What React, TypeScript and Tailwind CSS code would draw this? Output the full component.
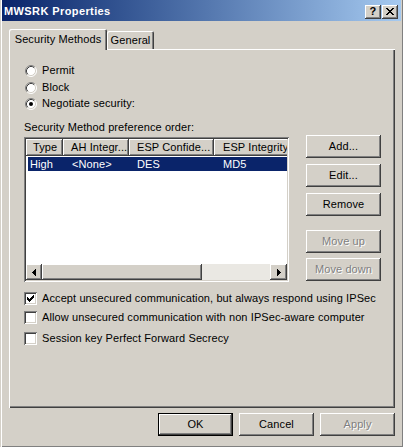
import type { ReactNode } from 'react'

const raised =
  'shadow-[inset_-1px_-1px_#404040,inset_1px_1px_#ffffff,inset_-2px_-2px_#808080,inset_2px_2px_#d4d0c8]'
const sunken =
  'shadow-[inset_1px_1px_#808080,inset_-1px_-1px_#ffffff,inset_2px_2px_#404040,inset_-2px_-2px_#d4d0c8]'
const greyText = 'text-[#808080] [text-shadow:1px_1px_0_#ffffff]'

function Button({ children, disabled = false, primary = false }: { children: ReactNode; disabled?: boolean; primary?: boolean }) {
  const frame = primary
    ? 'shadow-[inset_0_0_0_1px_#000000,inset_-2px_-2px_#404040,inset_2px_2px_#ffffff,inset_-3px_-3px_#808080]'
    : raised
  return (
    <div className={`w-[75px] h-[23px] shrink-0 flex items-center justify-center bg-[#d4d0c8] ${frame} ${disabled ? greyText : 'text-black'}`}>
      {children}
    </div>
  )
}

function Radio({ checked = false }: { checked?: boolean }) {
  return (
    <svg width="12" height="12" viewBox="0 0 12 12" className="shrink-0 ml-[1px]">
      <circle cx="6" cy="6" r="5" fill="#ffffff" />
      <path d="M9.89 2.11A5.5 5.5 0 0 0 2.11 9.89" fill="none" stroke="#808080" />
      <path d="M9.89 2.11A5.5 5.5 0 0 1 2.11 9.89" fill="none" stroke="#ffffff" />
      <path d="M9.18 2.82A4.5 4.5 0 0 0 2.82 9.18" fill="none" stroke="#404040" />
      <path d="M9.18 2.82A4.5 4.5 0 0 1 2.82 9.18" fill="none" stroke="#d4d0c8" />
      {checked && <circle cx="6" cy="6" r="2" fill="#000000" />}
    </svg>
  )
}

const tick = [2, 3, 4, 3, 2, 1, 0]

function Checkbox({ checked = false }: { checked?: boolean }) {
  return (
    <div className={`w-[13px] h-[13px] shrink-0 bg-white ${sunken}`}>
      {checked && (
        <svg width="13" height="13" viewBox="0 0 13 13" shapeRendering="crispEdges">
          {tick.map((y, i) => (
            <rect key={i} x={3 + i} y={3 + y} width="1" height="3" fill="#000000" />
          ))}
        </svg>
      )}
    </div>
  )
}

// close glyph, row by row: [x, width]
const xRows: [number, number][][] = [
  [[0, 2], [6, 2]],
  [[1, 2], [5, 2]],
  [[2, 4]],
  [[3, 2]],
  [[2, 4]],
  [[1, 2], [5, 2]],
  [[0, 2], [6, 2]],
]

function Arrow({ dir }: { dir: 'left' | 'right' }) {
  const cols = [
    [3, 1],
    [2, 3],
    [1, 5],
    [0, 7],
  ]
  return (
    <svg width="4" height="7" viewBox="0 0 4 7" shapeRendering="crispEdges">
      {cols.map(([y, h], i) => (
        <rect key={i} x={dir === 'left' ? i : 3 - i} y={y} width="1" height={h} fill="#000000" />
      ))}
    </svg>
  )
}

function RadioRow({ label, checked, className = '' }: { label: string; checked?: boolean; className?: string }) {
  return (
    <div className={`flex items-center h-[13px] gap-[5px] ${className}`}>
      <Radio checked={checked} />
      <span>{label}</span>
    </div>
  )
}

function CheckRow({ label, checked, className = '' }: { label: string; checked?: boolean; className?: string }) {
  return (
    <div className={`flex items-center h-[13px] gap-[5px] ${className}`}>
      <Checkbox checked={checked} />
      <span className="whitespace-nowrap">{label}</span>
    </div>
  )
}

export default function App() {
  return (
    <div className="w-[403px] h-[447px] bg-[#d4d0c8] font-['Liberation_Sans',Arial,sans-serif] text-[11px] leading-[13px] tracking-[0.1px] text-black shadow-[inset_1px_0_#d4d0c8,inset_2px_0_#ffffff,inset_-1px_-1px_#808080] flex flex-col overflow-hidden select-none">
      {/* caption */}
      <div className="mx-[2px] h-[21px] shrink-0 flex items-start bg-linear-to-r from-[#0a246a] to-[#a6caf0]">
        <div className="pl-[2px] pt-[5px] font-bold text-white whitespace-nowrap tracking-[0.4px]">MWSRK Properties</div>
        <div className="ml-auto mt-[5px] mr-[3px] flex gap-[1px]">
          <div className={`w-[16px] h-[14px] bg-[#d4d0c8] ${raised} flex items-center justify-center font-bold text-[11px] leading-[11px] pb-[1px]`}>
            ?
          </div>
          <div className={`w-[16px] h-[14px] bg-[#d4d0c8] ${raised}`}>
            <svg width="16" height="14" viewBox="0 0 16 14" shapeRendering="crispEdges">
              {xRows.map((segs, y) =>
                segs.map(([x, w], j) => <rect key={`${y}-${j}`} x={4 + x} y={3 + y} width={w} height="1" fill="#000000" />),
              )}
            </svg>
          </div>
        </div>
      </div>

      {/* tabs */}
      <div className="ml-[9px] mt-[8px] h-[20px] shrink-0 flex items-end">
        <div className="relative z-10 self-start w-[98px] h-[21px] bg-[#d4d0c8] rounded-tl-[2px] rounded-tr-[2px] shadow-[inset_1px_1px_#ffffff,inset_-1px_0_#404040,inset_-2px_0_#808080] flex items-center justify-center pb-[1px]">
          Security Methods
        </div>
        <div className="w-[47px] h-[18px] bg-[#d4d0c8] rounded-tl-[2px] rounded-tr-[2px] shadow-[inset_1px_1px_#ffffff,inset_-1px_0_#404040,inset_-2px_0_#808080] flex items-center justify-center pt-[1px]">
          General
        </div>
      </div>

      {/* panel */}
      <div className="ml-[9px] w-[386px] h-[359px] shrink-0 shadow-[inset_1px_1px_#ffffff,inset_-1px_-1px_#404040,inset_-2px_-2px_#808080] flex flex-col pl-[15px] pt-[15px]">
        <RadioRow label="Permit" />
        <RadioRow label="Block" className="mt-[4px]" />
        <RadioRow label="Negotiate security:" checked className="mt-[3px]" />
        <div className="mt-[11px] h-[13px]">Security Method preference order:</div>

        <div className="mt-[1px] flex items-start">
          {/* list view */}
          <div className={`mt-[2px] w-[265px] h-[145px] bg-white ${sunken} p-[2px] flex flex-col`}>
            <div className="h-[17px] flex overflow-hidden whitespace-nowrap shrink-0">
              <div className={`w-[37px] shrink-0 bg-[#d4d0c8] ${raised} flex items-center pl-[7px]`}>Type</div>
              <div className={`w-[66px] shrink-0 bg-[#d4d0c8] ${raised} flex items-center pl-[8px]`}>AH Integr...</div>
              <div className={`w-[85px] shrink-0 bg-[#d4d0c8] ${raised} flex items-center pl-[8px]`}>ESP Confide...</div>
              <div className={`w-[90px] shrink-0 bg-[#d4d0c8] ${raised} flex items-center pl-[9px]`}>ESP Integrity</div>
            </div>
            <div className="flex-1 pt-[1px]">
              <div className="ml-[2px] h-[14px] bg-[#0a246a] text-white flex items-center whitespace-nowrap overflow-hidden">
                <div className="w-[35px] shrink-0 pl-[2px]">High</div>
                <div className="w-[66px] shrink-0 pl-[9px]">&lt;None&gt;</div>
                <div className="w-[85px] shrink-0 pl-[8px]">DES</div>
                <div className="shrink-0 pl-[9px]">MD5</div>
              </div>
            </div>
            <div className="h-[16px] flex shrink-0">
              <div className={`w-[16px] shrink-0 bg-[#d4d0c8] ${raised} flex items-center justify-center`}>
                <Arrow dir="left" />
              </div>
              <div className={`w-[160px] shrink-0 bg-[#d4d0c8] ${raised}`} />
              <div className="flex-1 bg-[#eae8e3]" />
              <div className={`w-[17px] shrink-0 bg-[#d4d0c8] ${raised} flex items-center justify-center`}>
                <Arrow dir="right" />
              </div>
            </div>
          </div>

          {/* side buttons */}
          <div className="ml-[17px] flex flex-col">
            <Button>Add...</Button>
            <div className="mt-[6px]">
              <Button>Edit...</Button>
            </div>
            <div className="mt-[6px]">
              <Button>Remove</Button>
            </div>
            <div className="mt-[14px]">
              <Button disabled>Move up</Button>
            </div>
            <div className="mt-[5px]">
              <Button disabled>Move down</Button>
            </div>
          </div>
        </div>

        <CheckRow label="Accept unsecured communication, but always respond using IPSec" checked className="mt-[10px]" />
        <CheckRow label="Allow unsecured communication with non IPSec-aware computer" className="mt-[6px]" />
        <CheckRow label="Session key Perfect Forward Secrecy" className="mt-[8px]" />
      </div>

      {/* dialog buttons */}
      <div className="ml-[9px] w-[386px] mt-[5px] flex justify-end gap-[6px]">
        <Button primary>OK</Button>
        <Button>Cancel</Button>
        <Button disabled>Apply</Button>
      </div>
    </div>
  )
}
